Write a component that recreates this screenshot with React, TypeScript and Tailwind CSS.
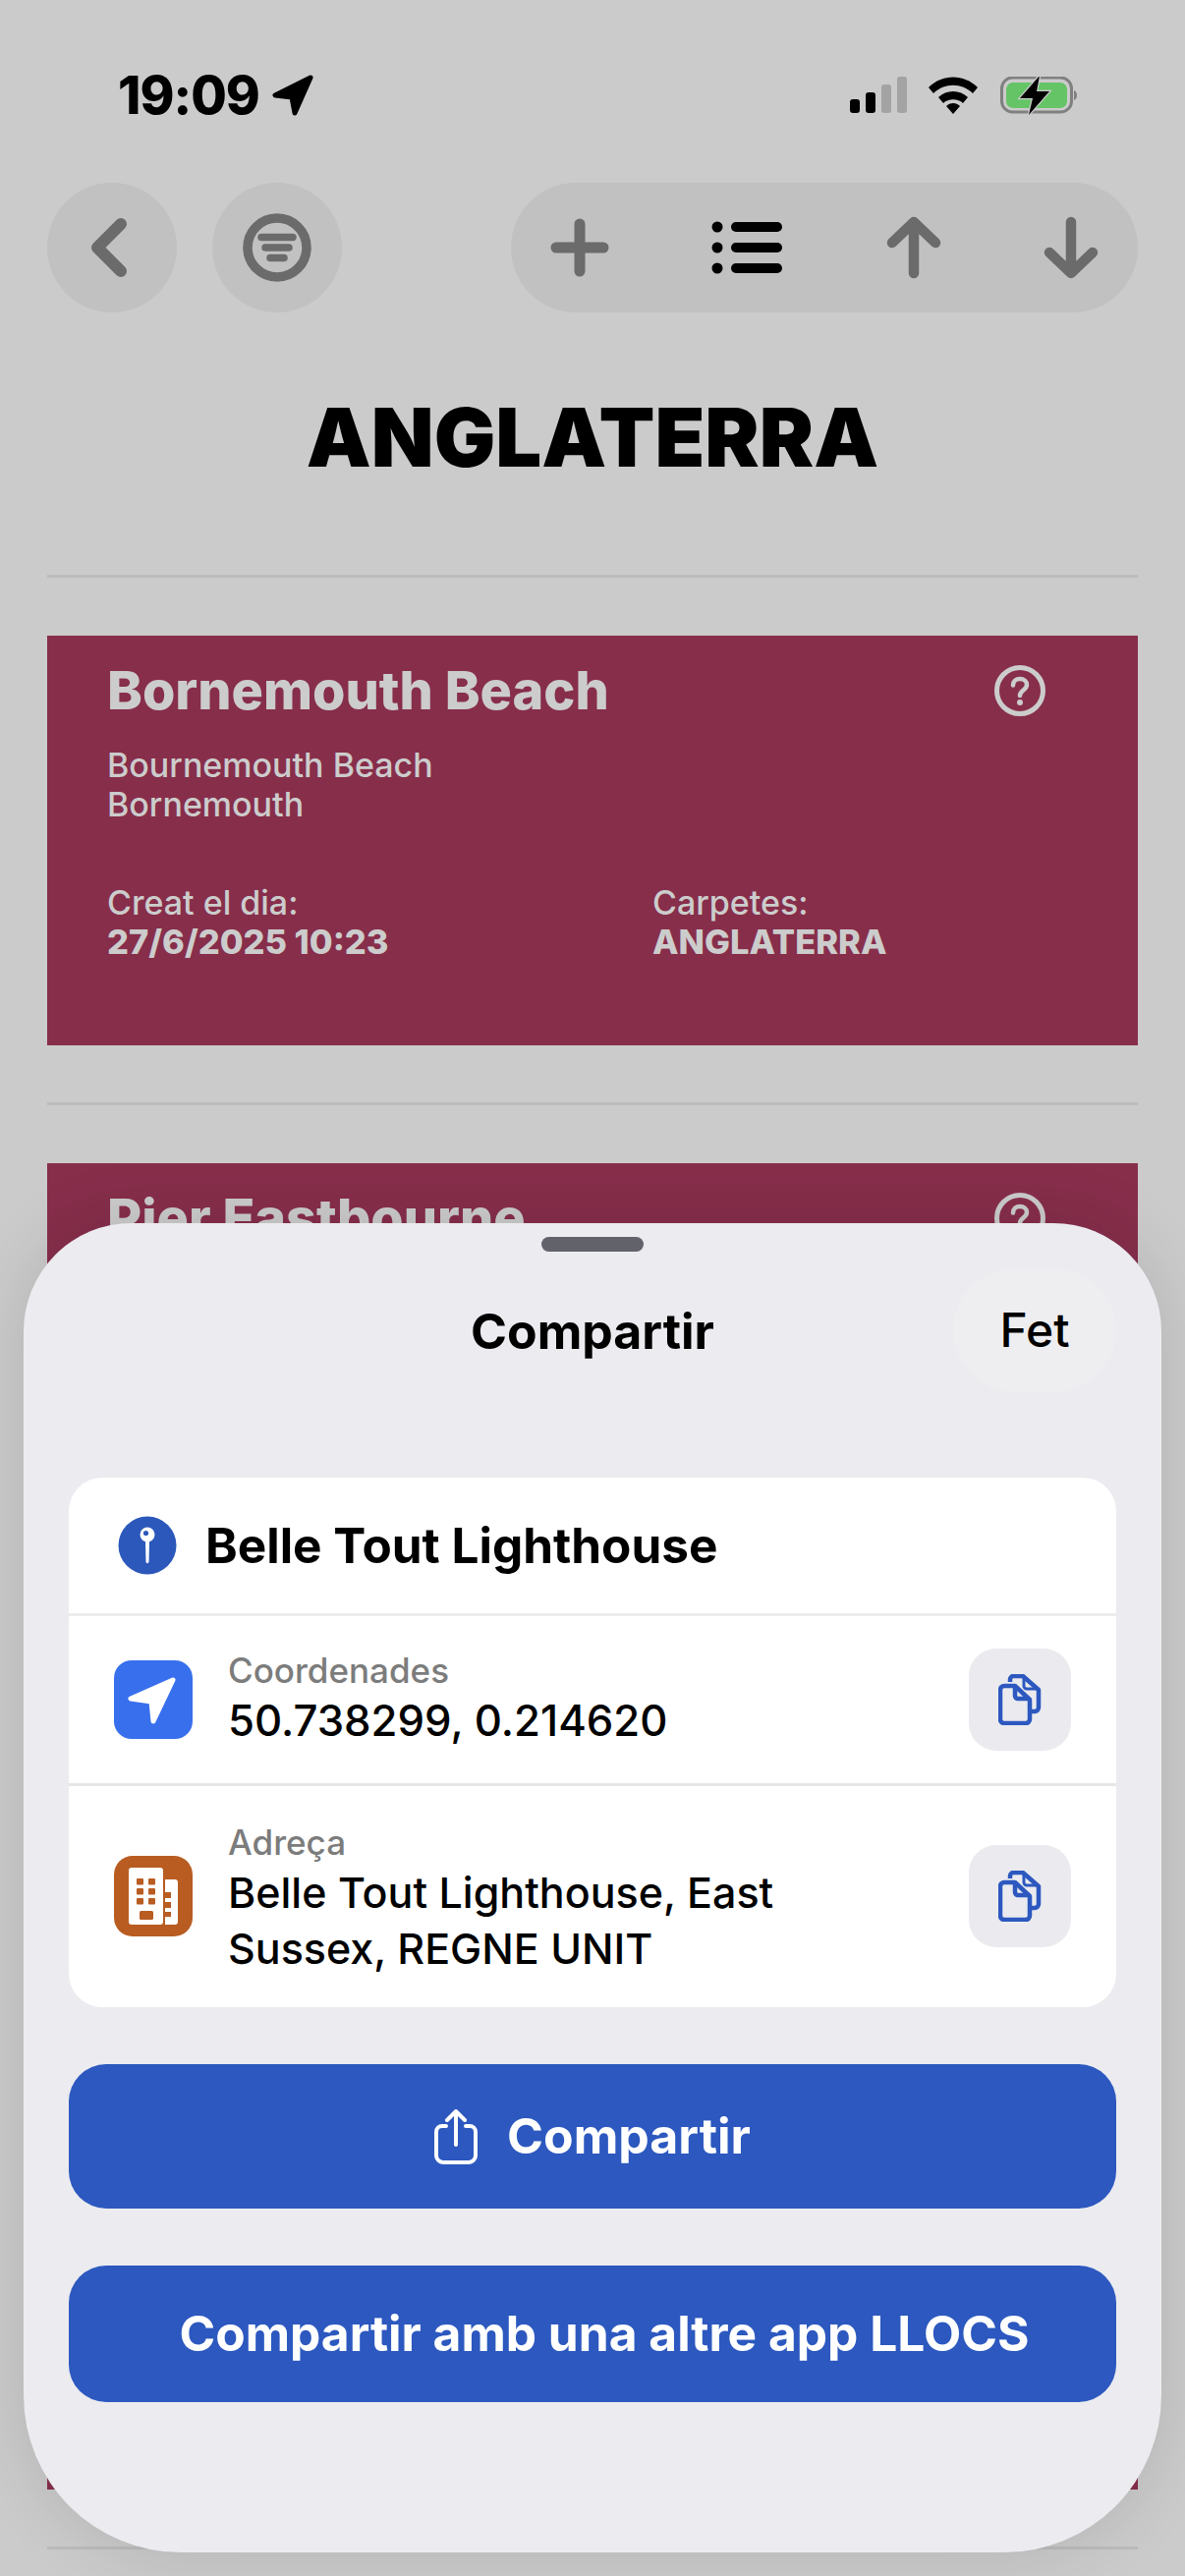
import { ReactNode } from 'react';

const FONT = "font-['Inter',sans-serif]";

function Divider() {
  return <div className="h-[3px] bg-[#bcbcbc]" />;
}

function HelpIcon() {
  return (
    <svg viewBox="0 0 52 52" className="h-[52px] w-[52px]" fill="none">
      <circle cx="26" cy="26" r="23.5" stroke="#cccccc" strokeWidth="5" />
      <path d="M19 20.5c0-4 3-6.5 7-6.5s7 2.5 7 6c0 5.5-7 5.5-7 11" stroke="#cccccc" strokeWidth="4.5" strokeLinecap="round" />
      <circle cx="26" cy="38" r="3" fill="#cccccc" />
    </svg>
  );
}

function PlaceCard({ name, line1, line2, date }: { name: string; line1: string; line2: string; date: string }) {
  return (
    <div className="h-[417px] bg-[#872e4b] pl-[61px] pr-[94px] pt-[25px] text-[#cccccc]">
      <div className="flex items-center justify-between">
        <h2 className="text-[54px] font-extrabold leading-[62px]">{name}</h2>
        <HelpIcon />
      </div>
      <p className="mt-[25px] text-[34px] font-medium leading-[40px]">{line1}<br />{line2}</p>
      <div className="mt-[60px] flex text-[34px] font-medium leading-[40px]">
        <div className="w-[555px]">
          <p>Creat el dia:</p>
          <p className="text-[34.5px] font-extrabold">{date}</p>
        </div>
        <div>
          <p>Carpetes:</p>
          <p className="text-[34.5px] font-extrabold">ANGLATERRA</p>
        </div>
      </div>
    </div>
  );
}

function StatusBar() {
  return (
    <div className="flex h-[186px] items-start justify-between pl-[120px] pr-[106px] pt-[70px]">
      <div className="flex items-center gap-[12px]">
        <span className="text-[53px] font-extrabold leading-[54px] tracking-[-1px] text-black">19:09</span>
        <svg viewBox="0 0 44 42" className="h-[42px] w-[44px]">
          <path d="M40 3 L4 21 L21 23 L24 39 Z" fill="#000" stroke="#000" strokeWidth="5" strokeLinejoin="round" />
        </svg>
      </div>
      <div className="flex items-center pt-[8px]">
        <svg viewBox="0 0 235 40" className="h-[40px] w-[235px]">
          <rect x="0" y="23" width="10" height="14" rx="3" fill="#000" />
          <rect x="16" y="16" width="10" height="21" rx="3" fill="#000" />
          <rect x="32" y="8" width="10" height="29" rx="3" fill="#a3a3a3" />
          <rect x="48" y="0" width="10" height="37" rx="3" fill="#a3a3a3" />
          <path d="M80 11 C94 -3 116 -3 130 11 L125 17 C114 6 96 6 85 17 Z" fill="#000" />
          <path d="M90 21 C98 13 112 13 120 21 L115 27 C110 22 100 22 95 27 Z" fill="#000" />
          <path d="M98 30 C102 26 108 26 112 30 L105 38 Z" fill="#000" />
          <rect x="154.5" y="1" width="71" height="35" rx="11" fill="none" stroke="#808080" strokeWidth="3" />
          <rect x="159" y="6" width="62" height="26" rx="7" fill="#65c466" />
          <path d="M228 14 C232 15 232 23 228 24 Z" fill="#808080" />
          <path d="M193 -1 L173 22 L186 22 L182 39 L203 15 L190 15 Z" fill="#000" stroke="#cbcbcb" strokeWidth="2.5" paintOrder="stroke" />
        </svg>
      </div>
    </div>
  );
}

function RoundBtn({ children }: { children: ReactNode }) {
  return <div className="flex h-[132px] w-[132px] items-center justify-center rounded-full bg-[#c1c1c1]">{children}</div>;
}

function TopBar() {
  return (
    <div className="flex items-center justify-between">
      <div className="flex gap-[36px]">
        <RoundBtn>
          <svg viewBox="0 0 40 62" className="ml-[-6px] h-[62px] w-[40px]" fill="none">
            <path d="M32 7 L8 31 L32 55" stroke="#6b6b6b" strokeWidth="12" strokeLinecap="round" strokeLinejoin="round" />
          </svg>
        </RoundBtn>
        <RoundBtn>
          <svg viewBox="0 0 72 72" className="h-[72px] w-[72px]" fill="none">
            <circle cx="36" cy="36" r="30" stroke="#6b6b6b" strokeWidth="9.5" />
            <path d="M20 25.5H52M24 36H48M29 46.5H43" stroke="#6b6b6b" strokeWidth="7.5" strokeLinecap="round" />
          </svg>
        </RoundBtn>
      </div>
      <div className="flex h-[132px] w-[638px] items-center justify-between rounded-full bg-[#c1c1c1] pl-[40px] pr-[40px]">
        <svg viewBox="0 0 60 60" className="h-[60px] w-[60px]" fill="none">
          <path d="M30 6V54M6 30H54" stroke="#6b6b6b" strokeWidth="11" strokeLinecap="round" />
        </svg>
        <svg viewBox="0 0 74 56" className="h-[56px] w-[74px]">
          <circle cx="6" cy="7" r="5.5" fill="#000" />
          <circle cx="6" cy="28" r="5.5" fill="#000" />
          <circle cx="6" cy="49" r="5.5" fill="#000" />
          <rect x="20" y="2" width="52" height="10" rx="5" fill="#000" />
          <rect x="20" y="23" width="52" height="10" rx="5" fill="#000" />
          <rect x="20" y="44" width="52" height="10" rx="5" fill="#000" />
        </svg>
        <svg viewBox="0 0 56 64" className="h-[64px] w-[56px]" fill="none">
          <path d="M28 58V7M6 27L28 6L50 27" stroke="#6b6b6b" strokeWidth="10.5" strokeLinecap="round" strokeLinejoin="round" />
        </svg>
        <svg viewBox="0 0 56 64" className="h-[64px] w-[56px]" fill="none">
          <path d="M28 6V57M6 37L28 58L50 37" stroke="#6b6b6b" strokeWidth="10.5" strokeLinecap="round" strokeLinejoin="round" />
        </svg>
      </div>
    </div>
  );
}

function CopyBtn() {
  return (
    <div className="flex h-[104px] w-[104px] shrink-0 items-center justify-center rounded-[28px] bg-[#eaeaef]">
      <svg viewBox="0 0 44 52" className="h-[52px] w-[44px]" fill="none" stroke="#2c58bf" strokeWidth="4.5" strokeLinejoin="round">
        <path d="M12 8V5.5A3.5 3.5 0 0 1 15.5 2H25L41 16V34A4 4 0 0 1 37 38H33" />
        <path d="M26 2V12A3 3 0 0 0 29 15H41" strokeWidth="3" />
        <path d="M6 12H17L32 26V46A4 4 0 0 1 28 50H6A4 4 0 0 1 2 46V16A4 4 0 0 1 6 12Z" fill="#eaeaef" />
        <path d="M17 12V22A3 3 0 0 0 20 25H32" />
      </svg>
    </div>
  );
}

function PinIcon() {
  return (
    <svg viewBox="0 0 60 60" className="h-[60px] w-[60px]">
      <circle cx="30" cy="30" r="29.5" fill="#2c58bb" />
      <path d="M28 26 L32 26 L31.5 47 Q30 49.5 28.5 47 Z" fill="#fff" />
      <circle cx="30" cy="19" r="7.5" fill="#fff" />
      <circle cx="28.5" cy="17.5" r="2.6" fill="#2c58bb" />
    </svg>
  );
}

function NavIcon() {
  return (
    <svg viewBox="0 0 80 80" className="h-[80px] w-[80px] shrink-0">
      <rect width="80" height="80" rx="18" fill="#386fec" />
      <path d="M60 20 L17 39 L38 42 L40 62 Z" fill="#fff" stroke="#fff" strokeWidth="5" strokeLinejoin="round" />
    </svg>
  );
}

function BuildingIcon() {
  return (
    <svg viewBox="0 0 80 82" className="h-[82px] w-[80px] shrink-0">
      <rect width="80" height="82" rx="19" fill="#b85c22" />
      <rect x="15" y="12" width="35" height="58" rx="3" fill="#fff" />
      <path d="M52 24H62A3 3 0 0 1 65 27V67A3 3 0 0 1 62 70H52V62H58V57H52V53H58V47H52V43H58V37H52Z" fill="#fff" />
      <g fill="#b85c22">
        <rect x="23" y="23" width="7" height="6.5" rx="1" />
        <rect x="35" y="23" width="7" height="6.5" rx="1" />
        <rect x="23" y="33" width="7" height="6.5" rx="1" />
        <rect x="35" y="33" width="7" height="6.5" rx="1" />
        <rect x="23" y="43" width="7" height="6.5" rx="1" />
        <rect x="35" y="43" width="7" height="6.5" rx="1" />
        <rect x="26" y="56" width="14" height="9" rx="1.5" />
      </g>
    </svg>
  );
}

function ShareIcon() {
  return (
    <svg viewBox="0 0 44 56" className="h-[56px] w-[44px]" fill="none" stroke="#fff" strokeWidth="4" strokeLinecap="round" strokeLinejoin="round">
      <path d="M12 17H8A6 6 0 0 0 2 23V47A7 7 0 0 0 9 54H35A7 7 0 0 0 42 47V23A6 6 0 0 0 36 17H32" />
      <path d="M22 36V2M13 11L22 2L31 11" />
    </svg>
  );
}

function ShareSheet() {
  return (
    <div className="absolute bottom-[24px] left-[24px] right-[24px] h-[1353px] rounded-b-[160px] rounded-t-[110px] bg-[#ebebf0] px-[46px] shadow-[0_0_70px_rgba(0,0,0,0.12)]">
      <div className="mx-auto mt-[14px] h-[15px] w-[104px] rounded-full bg-[#62626a]" />
      <div className="relative mt-[17px] flex h-[126px] items-center justify-center">
        <h3 className="mt-[2px] text-[50px] font-bold text-black">Compartir</h3>
        <div className="absolute right-0 top-0 flex h-[126px] w-[166px] items-center justify-center rounded-full bg-[#eeeef1] text-[48px] font-medium text-black">
          Fet
        </div>
      </div>

      <div className="mt-[87px] h-[539px] rounded-[34px] bg-white">
        <div className="flex h-[141px] items-center gap-[29px] border-b-[3px] border-[#ececee] pl-[50px]">
          <PinIcon />
          <span className="text-[49.5px] font-bold leading-[60px] text-black">Belle Tout Lighthouse</span>
        </div>
        <div className="flex h-[173px] items-center border-b-[3px] border-[#e6e6e8] pl-[46px] pr-[46px]">
          <NavIcon />
          <div className="ml-[36px] flex-1">
            <p className="text-[35px] font-medium leading-[40px] text-[#7c7c7c]">Coordenades</p>
            <p className="mt-[3px] text-[43.7px] font-medium leading-[58px] text-black">50.738299, 0.214620</p>
          </div>
          <CopyBtn />
        </div>
        <div className="flex h-[224px] items-center pl-[46px] pr-[46px]">
          <BuildingIcon />
          <div className="ml-[36px] flex-1 pt-[6px]">
            <p className="text-[35px] font-medium leading-[40px] text-[#7c7c7c]">Adreça</p>
            <p className="mt-[3px] text-[43px] font-medium leading-[57px] text-black">Belle Tout Lighthouse, East<br />Sussex, REGNE UNIT</p>
          </div>
          <CopyBtn />
        </div>
      </div>

      <div className="mt-[58px] flex h-[147px] items-center justify-center gap-[30px] rounded-[38px] bg-[#2c58bf] text-[50px] font-bold text-white">
        <ShareIcon />
        <span>Compartir</span>
      </div>
      <div className="mt-[58px] flex h-[139px] items-center justify-center rounded-[38px] bg-[#2c58bf] pl-[24px] text-[49.7px] font-bold text-white">
        Compartir amb una altre app LLOCS
      </div>
    </div>
  );
}

export default function App() {
  return (
    <div className={`relative h-[2622px] overflow-hidden bg-[#cbcbcb] ${FONT}`}>
      <StatusBar />
      <div className="px-[48px]">
        <TopBar />
        <h1 className="mt-[79px] text-center text-[83px] font-black leading-[96px] text-black">ANGLATERRA</h1>
        <div className="mt-[92px]"><Divider /></div>
        <div className="mt-[59px]">
          <PlaceCard name="Bornemouth Beach" line1="Bournemouth Beach" line2="Bornemouth" date="27/6/2025 10:23" />
        </div>
        <div className="mt-[58px]"><Divider /></div>
        <div className="mt-[59px] h-[1350px] bg-[#872e4b] pl-[61px] pr-[94px] pt-[25px] text-[#cccccc]">
          <div className="flex items-center justify-between">
            <h2 className="text-[54px] font-extrabold leading-[62px]">Pier Eastbourne</h2>
            <HelpIcon />
          </div>
        </div>
        <div className="mt-[58px]"><Divider /></div>
      </div>
      <ShareSheet />
    </div>
  );
}
